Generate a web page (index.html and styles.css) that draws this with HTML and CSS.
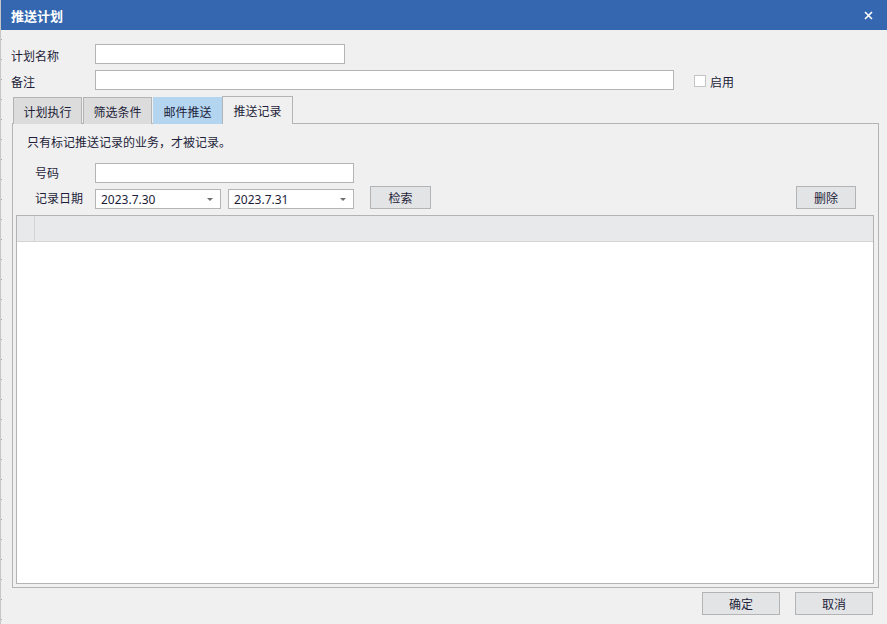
FILE: index.html
```html
<!DOCTYPE html>
<html lang="zh-CN">
<head>
  <meta charset="UTF-8" />
  <title>推送计划</title>
  <link rel="stylesheet" href="styles.css">
</head>
<body>
  <div class="dialog">
    <div class="titlebar">
      <span class="title">推送计划</span>
      <span class="close">
        <svg width="9" height="9" viewBox="0 0 9 9"><path d="M1 1L8 8M8 1L1 8" stroke="#ffffff" stroke-width="1.6"/></svg>
      </span>
    </div>

    <div class="form">
      <div class="form-row">
        <label class="form-label">计划名称</label>
        <input type="text" class="field name-field" />
      </div>
      <div class="form-row">
        <label class="form-label">备注</label>
        <input type="text" class="field note-field" />
        <span class="check-box"></span>
        <span class="check-text">启用</span>
      </div>
    </div>

    <div class="tabs">
      <div class="tab">计划执行</div>
      <div class="tab">筛选条件</div>
      <div class="tab tab-blue">邮件推送</div>
      <div class="tab tab-active">推送记录</div>
    </div>

    <div class="tab-panel">
      <p class="hint">只有标记推送记录的业务，才被记录。</p>

      <div class="panel-row">
        <label class="panel-label">号码</label>
        <input type="text" class="field number-field" />
      </div>
      <div class="panel-row date-row">
        <label class="panel-label">记录日期</label>
        <div class="field date-field"><span>2023.7.30</span><i class="arrow"></i></div>
        <div class="field date-field"><span>2023.7.31</span><i class="arrow"></i></div>
        <button class="btn search-btn">检索</button>
        <button class="btn delete-btn">删除</button>
      </div>

      <div class="grid">
        <div class="grid-head">
          <div class="grid-indicator"></div>
          <div class="grid-col"></div>
        </div>
        <div class="grid-body"></div>
      </div>
    </div>

    <div class="footer">
      <button class="btn footer-btn">确定</button>
      <button class="btn footer-btn">取消</button>
    </div>
  </div>
</body>
</html>
```

FILE: styles.css
```css
* {
  margin: 0;
  padding: 0;
  box-sizing: border-box;
}

body {
  width: 887px;
  height: 624px;
  overflow: hidden;
  background-color: #f0f0f0;
  color: #1e1e3a;
  font-family: "Noto Sans", "Noto Sans CJK SC", sans-serif;
  font-size: 12px;
  border-left: 1px solid #c6c6c6;
  background-image: repeating-linear-gradient(to bottom, transparent 0, transparent 19px, #a8a8a8 19px, #a8a8a8 20px);
  background-size: 2px 100%;
  background-repeat: no-repeat;
}

.dialog {
  width: 886px;
  height: 624px;
}

.titlebar {
  height: 30px;
  background-color: #3467af;
  display: flex;
  align-items: center;
  justify-content: space-between;
  padding: 0 14px 0 10px;
}

.title {
  color: #ffffff;
  font-weight: bold;
  font-size: 13px;
}

.close {
  display: flex;
  align-items: center;
}

.form {
  padding: 14px 0 0 10px;
  display: flex;
  flex-direction: column;
  gap: 6px;
}

.form-row {
  display: flex;
  align-items: center;
  height: 20px;
}

.form-label {
  width: 84px;
  line-height: 20px;
  padding-top: 5px;
}

.field {
  height: 20px;
  border: 1px solid #b4b4b4;
  background-color: #ffffff;
  outline: none;
  font-family: inherit;
  font-size: 12px;
  color: #1e1e3a;
}

.name-field {
  width: 250px;
}

.note-field {
  width: 579px;
}

.check-box {
  width: 12px;
  height: 12px;
  border: 1px solid #c4c4c4;
  background-color: #ffffff;
  margin-left: 20px;
  margin-top: 2px;
}

.check-text {
  margin-left: 4px;
  padding-top: 3px;
}

.tabs {
  display: flex;
  align-items: flex-end;
  height: 28px;
  margin: 6px 0 -1px 11px;
  position: relative;
  z-index: 1;
}

.tab {
  width: 69px;
  height: 27px;
  border: 1px solid #b4b4b4;
  border-bottom: none;
  background-color: #dcdcdc;
  display: flex;
  align-items: center;
  justify-content: center;
  margin-left: 1px;
  padding-top: 1px;
}

.tab-blue {
  background-color: #b4d5f0;
  border-color: #b4d5f0;
}

.tab-active {
  height: 28px;
  width: 71px;
  margin-left: 0;
  background-color: #f0f0f0;
}

.tab-panel {
  margin-left: 11px;
  width: 867px;
  height: 465px;
  border: 1px solid #b4b4b4;
  display: flex;
  flex-direction: column;
  padding: 10px 4px 3px 3px;
}

.hint {
  padding-left: 11px;
  line-height: 17px;
  height: 29px;
}

.panel-row {
  display: flex;
  align-items: center;
  height: 20px;
}

.date-row {
  margin-top: 3px;
  height: 23px;
  align-items: flex-end;
  padding-right: 18px;
}

.panel-label {
  width: 79px;
  padding-left: 19px;
  line-height: 20px;
  padding-top: 2px;
}

.number-field {
  width: 259px;
}

.date-field {
  width: 126px;
  display: flex;
  align-items: center;
  justify-content: space-between;
  padding: 1px 7px 0 5px;
}

.date-field + .date-field {
  margin-left: 7px;
}

.arrow {
  width: 0;
  height: 0;
  border-left: 3px solid transparent;
  border-right: 3px solid transparent;
  border-top: 3px solid #6e6e6e;
}

.btn {
  height: 23px;
  border: 1px solid #b4b4b4;
  background-color: #e3e4e6;
  font-family: inherit;
  font-size: 12px;
  color: #1e1e3a;
}

.search-btn {
  width: 61px;
  margin-left: 16px;
}

.delete-btn {
  width: 60px;
  margin-left: auto;
}

.grid {
  margin-top: 6px;
  flex: 1;
  border: 1px solid #b4b4b4;
  background-color: #ffffff;
  display: flex;
  flex-direction: column;
}

.grid-head {
  height: 26px;
  display: flex;
  background-color: #e8e9eb;
  border-bottom: 1px solid #d4d4d4;
}

.grid-indicator {
  width: 18px;
  border-right: 1px solid #d4d4d4;
}

.grid-col {
  flex: 1;
}

.grid-body {
  flex: 1;
}

.footer {
  display: flex;
  justify-content: flex-end;
  gap: 15px;
  padding: 4px 14px 0 0;
}

.footer-btn {
  width: 78px;
}
```
